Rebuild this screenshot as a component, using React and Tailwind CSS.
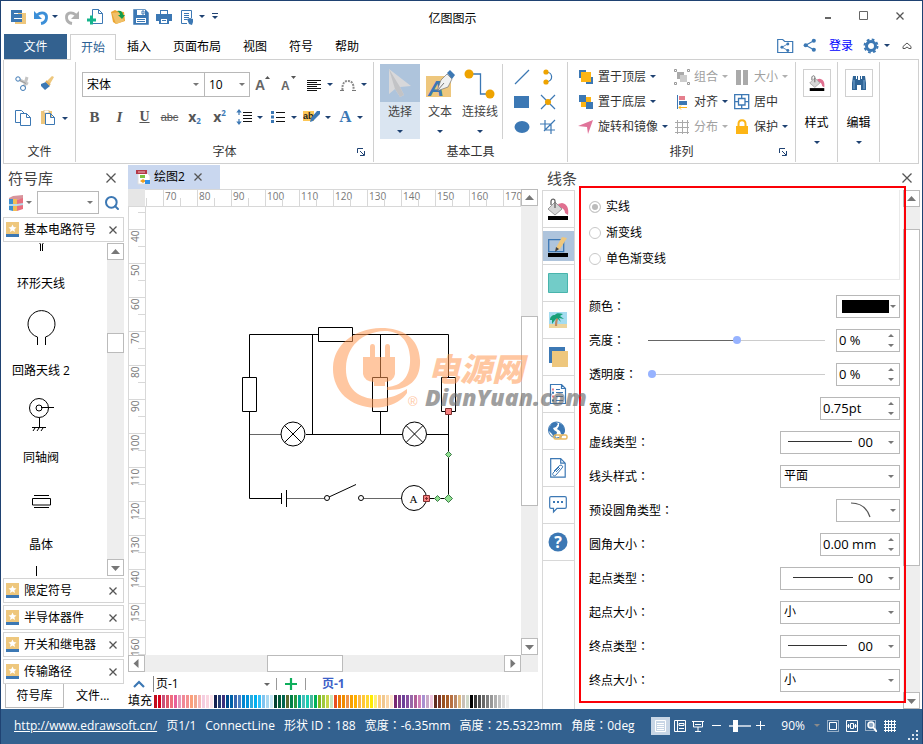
import React from 'react';
import { Search } from 'lucide-react';

const Icon = ({ w = 16, h = 16, children, className = '' }) => (
  <svg width={w} height={h} viewBox={`0 0 ${w} ${h}`} fill="none" className={`shrink-0 ${className}`} aria-hidden="true">
    {children}
  </svg>
);

const Caret = ({ className = 'text-[#1f4272]' }) => (
  <Icon w={6} h={3} className={className}>
    <path d="M0 0h6L3 3z" fill="currentColor" />
  </Icon>
);

const Cross = ({ size = 9, className = 'text-[#555]' }) => (
  <Icon w={size} h={size} className={className}>
    <path d={`M.5 .5L${size - 0.5} ${size - 0.5}M${size - 0.5} .5L.5 ${size - 0.5}`} stroke="currentColor" strokeWidth="1.3" />
  </Icon>
);

/* ---------- Icons ---------- */

const LogoIcon = () => (
  <Icon>
    <path d="M8 4h8v11H5v-3h7V7H8z" fill="#eec77d" />
    <path d="M1 1h11v3H4v1h8v2H1zM1 7h11v2H4v1h8v3H1z" fill="#3c78b4" />
    <path d="M1 1h3v12H1z" fill="#3c78b4" />
  </Icon>
);

const UndoIcon = ({ color = '#3c8fd8', flip }) => (
  <Icon className={flip ? '-scale-x-100' : ''}>
    <path d="M4 6C9 2 14 4 13.500 9c-.3 3-2.500 5-5.500 5.500" stroke={color} strokeWidth="2.800" />
    <path d="M1 2v8h8z" fill={color} />
  </Icon>
);

const NewIcon = () => (
  <Icon>
    <path d="M5.500 .5h6l4 4v10h-10zM11.500 .5v4h4" stroke="#3c78b4" fill="#fff" />
    <path d="M4.500 6.500v9M0 11h9" stroke="#14b48c" strokeWidth="3" />
  </Icon>
);

const OpenIcon = () => (
  <Icon>
    <path d="M1 3l4-2 2 1 7 1 1 9-9 3-3-2z" fill="#eda531" />
    <path d="M2 4l9-1 3 9-8 3z" fill="#f0c068" />
    <path d="M7 2c4-1 6 1 6 4h2l-3 4-4-4h2c0-2-1-3-3-4z" fill="#129c4c" />
  </Icon>
);

const SaveIcon = () => (
  <Icon>
    <path d="M1 1h11l3 3v11H1z" stroke="#3c78b4" strokeWidth="1.500" fill="#3c78b4" />
    <path d="M4 1h8v5H4zM3 9h10v5H3z" fill="#fff" />
    <path d="M9 2h2v3H9zM4 10.500h8M4 12.500h8" stroke="#3c78b4" />
  </Icon>
);

const PrintIcon = () => (
  <Icon>
    <path d="M4 1h8v4h4v7h-3v3H3v-3H0V5h4z" fill="#3c78b4" />
    <path d="M5 2h6v3H5zM5 10h6v4H5z" fill="#fff" />
    <path d="M6 11.500h4" stroke="#3c78b4" />
  </Icon>
);

const PreviewIcon = () => (
  <Icon>
    <path d="M12.500 9V1.500h-10v13H8M5 4.500h5M5 6.500h5M5 8.500h5M5 10.500h3" stroke="#3c78b4" />
    <path d="M8 10l3-1 3 1v3l-1 3-3-1z" fill="#3c78b4" />
  </Icon>
);

const ShareNodes = ({ x = 0, y = 0, s = 1 }) => (
  <g transform={`translate(${x} ${y}) scale(${s})`} fill="#3c78b4">
    <path d="M12 3L3 8l9 5" stroke="#3c78b4" strokeWidth="1.300" fill="none" />
    <circle cx="12" cy="3" r="2.300" />
    <circle cx="3" cy="8" r="2.300" />
    <circle cx="12" cy="13" r="2.300" />
  </g>
);

const GearIcon = () => (
  <Icon>
    <circle cx="8" cy="8" r="4.500" stroke="#3c78b4" strokeWidth="3" />
    <circle cx="8" cy="8" r="6.500" stroke="#3c78b4" strokeWidth="2" strokeDasharray="2.700 2.400" />
  </Icon>
);

const CutIcon = () => (
  <Icon>
    <path d="M5 4l8 4M9 12l3-11" stroke="#c4c4c4" strokeWidth="3" />
    <circle cx="3" cy="3" r="2.200" stroke="#3c78b4" fill="#fff" />
    <circle cx="8" cy="12" r="2.500" stroke="#3c78b4" fill="#fff" />
    <path d="M5 4.500l6 3" stroke="#999" />
  </Icon>
);

const BrushIcon = () => (
  <Icon>
    <path d="M7 5l5-5 2 1-4 7z" fill="#eec77d" />
    <path d="M1 8l5-2 4 4-5 4-4-4z" fill="#3c78b4" />
    <path d="M6 5l4 4" stroke="#e0ac58" strokeWidth="2" />
  </Icon>
);

const CopyIcon = () => (
  <Icon>
    <path d="M5 12.500H.5v-12h6l3 3M5.500 3.500h6l4 4v8h-10z" stroke="#3c78b4" fill="#fff" />
    <path d="M11.500 3.500v4h4" stroke="#3c78b4" />
  </Icon>
);

const PasteIcon = () => (
  <Icon>
    <path d="M0 1h11v13H0z" fill="#eec77d" />
    <path d="M3 0h5v3H3z" fill="#fff" stroke="#d9b36c" strokeWidth=".6" />
    <path d="M4.500 3.500h5l4 4v7h-9zM9.500 3.500v4h4" stroke="#3c78b4" fill="#fff" />
  </Icon>
);

const LineSpacingIcon = () => (
  <Icon>
    <path d="M3 1v5M3 10v5" stroke="#3c78b4" strokeWidth="1.200" />
    <path d="M3 0L.3 3.500h5.400zM3 16L.3 12.500h5.400z" fill="#3c78b4" />
    <path d="M7 3.500h9M7 6.500h9M7 9.500h9M7 12.500h9" stroke="#111" />
  </Icon>
);

const ListIcon = () => (
  <Icon>
    <path d="M1 2h3v3H1zM1 6.500h3v3H1zM1 11h3v3H1z" fill="#3c78b4" />
    <path d="M6 3.500h9M6 8.500h9M6 12.500h9" stroke="#111" />
  </Icon>
);

const AlignIcon = () => (
  <Icon>
    <path d="M1 3.500h14M1 5.500h10M1 7.500h14M1 9.500h10M1 11.500h14M1 13.500h10" stroke="#111" />
  </Icon>
);

const ArcTextIcon = () => (
  <Icon>
    <path d="M2.500 13C2 7 4 4 8 4s6 3 5.500 9" stroke="#8a8a8a" strokeWidth="2" strokeDasharray="2 1" />
    <path d="M0 13.500h4M12 13.500h4" stroke="#777" />
  </Icon>
);

const HighlightIcon = () => (
  <Icon w={17} h={16}>
    <path d="M0 2h11v10H0z" fill="#fdc757" />
    <text x="0" y="10" fontSize="9" fontWeight="bold" fontFamily="Liberation Sans" fill="#222">ab</text>
    <path d="M14 2h3v3l-7 7-3 1 1-4z" fill="#3c78b4" />
  </Icon>
);

const LaunchIcon = () => (
  <Icon w={8} h={8}>
    <path d="M.5 5V.5H6M3 3l4 4M7.500 3v4.500H3" stroke="#1f4272" />
  </Icon>
);

const CursorIcon = () => (
  <Icon w={32} h={34}>
    <path d="M5 3v25l6-5 5 8 4-2-4-8 11-1z" fill="#d8d8da" />
    <path d="M5 3l11 18 4 8-4 2-5-8z" fill="#c2c3c6" />
  </Icon>
);

const TextToolIcon = () => (
  <Icon w={32} h={32}>
    <path d="M2 9h25v21H2z" fill="#eec77d" />
    <text x="4" y="29" fontSize="22" fontWeight="bold" fontStyle="italic" fontFamily="Liberation Sans" fill="#3c78b4">A</text>
    <path d="M23 7l5 5-4 8-11 4 4-11z" fill="#f1f1f1" stroke="#777" strokeWidth=".7" />
    <path d="M13 24l7-8" stroke="#777" />
    <path d="M23 6l3-3 5 5-3 4z" fill="#3c78b4" />
  </Icon>
);

const ConnectorIcon = () => (
  <Icon w={32} h={32}>
    <path d="M6 7h10.500v20h10" stroke="#3c78b4" strokeWidth="1.300" />
    <circle cx="5" cy="7" r="4.500" fill="#eea300" />
    <circle cx="26" cy="27" r="4.500" fill="#eea300" />
  </Icon>
);

const BucketIcon = ({ size = 22 }) => (
  <svg width={size} height={size} viewBox="0 0 22 22" fill="none" className="shrink-0" aria-hidden="true">
    <path d="M11 6l4-1c5 1 7 5 6 12l-3-2c0-3-2-5-5-5z" fill="#e07090" />
    <path d="M1 11l7-7 7 7-7 6z" fill="#d6d6d6" stroke="#9a9a9a" />
    <path d="M4 7V3c1-3 4-2 4 0v7" stroke="#666" strokeWidth="1.300" />
    <path d="M1 18h20v4H1z" fill="#000" />
  </svg>
);

const BinocularsIcon = () => (
  <Icon>
    <path d="M2 1h3v3h1V1h1v4h2V1h1v3h1V1h3l1 7v7h-5v-5H6v5H1V8z" fill="#2f6496" />
    <path d="M3 5v9M13 5v9" stroke="#7aa9d4" />
  </Icon>
);

const BooksIcon = () => (
  <Icon>
    <path d="M1 3l4-2 10-1v4L9 5 1 5z" fill="#d8949c" />
    <path d="M1 4h4v12l-4-1z" fill="#3c8fd0" />
    <path d="M5 4h4v12H5z" fill="#f1bd55" />
    <path d="M9 5l6-2v11l-6 2z" fill="#e8707f" />
    <path d="M1 9h8l6-1v2l-6 1H1z" fill="#b9dcea" />
  </Icon>
);

const StarBookIcon = () => (
  <Icon w={13} h={15}>
    <path d="M0 0h13v12H0z" fill="#eec77d" />
    <path d="M6.500 2.500l1.200 2.600 2.800.3-2.100 1.900.6 2.700-2.500-1.400L4 10l.6-2.700-2.100-1.900 2.800-.3z" fill="#fff" />
    <path d="M0 12h13v3H0z" fill="#3c78b4" />
  </Icon>
);

const DocIcon = () => (
  <Icon w={15} h={15}>
    <path d="M2 2h8l4 4v8H2z" fill="#fff" stroke="#ddd" />
    <path d="M0 0h11v4H0z" fill="#b43a48" />
    <path d="M2 2h7" stroke="#e8b8bc" />
    <path d="M4 5h5v3H4z" fill="#7cc242" />
    <path d="M4 11l3-2 3 2-3 2z" fill="#f0a020" />
    <path d="M9 10h5v4H9z" fill="#2e8fe8" />
  </Icon>
);

/* ---------- Ribbon ---------- */

const RibbonGroup = ({ label, launcher, className = '', children }) => (
  <section className={`flex flex-col border-r border-[#d0d0d0] mt-0.5 h-[100px] ${className}`}>
    <div className="flex-1">{children}</div>
    <div className="relative h-5 leading-5 text-center text-[#333]">
      {label}
      {launcher && (
        <button aria-label={`${label}设置`} className="absolute right-2 top-[6px]">
          <LaunchIcon />
        </button>
      )}
    </div>
  </section>
);

const ToolButton = ({ label, caret, className = '', children }) => (
  <button aria-label={label} className={`flex items-center justify-center gap-[5px] h-6 ${className}`}>
    {children}
    {caret && <Caret />}
  </button>
);

const BigButton = ({ label, active, children }) => (
  <button className={`flex flex-col items-center w-10 h-[75px] text-[#444] ${active ? 'bg-[#dae5f1]' : ''}`}>
    <span className={`flex items-center justify-center w-full h-[38px] ${active ? 'bg-[#aec4dc]' : ''}`}>{children}</span>
    <span className="leading-5">{label}</span>
    <Caret className="text-[#1f4272] mt-2" />
  </button>
);

const ArrangeButton = ({ icon, label, caret, disabled }) => (
  <button disabled={disabled} className={`flex items-center gap-1 h-[25px] whitespace-nowrap ${disabled ? 'text-[#a0a0a0]' : 'text-[#333]'}`}>
    {icon}
    {label}
    {caret && <Caret className={disabled ? 'text-[#b0b0b0]' : 'text-[#1f4272]'} />}
  </button>
);

const PanelButton = ({ label, children }) => (
  <section className="flex flex-col items-center w-[42px] mt-0.5 h-[100px] border-r border-[#d0d0d0]">
    <button className="flex flex-col items-center mt-[7px]">
      <span className="flex items-center justify-center w-7 h-7 border border-[#d0d0d0]">{children}</span>
      <span className="mt-4 leading-5">{label}</span>
      <Caret className="text-[#1f4272] mt-2" />
    </button>
  </section>
);

const Ribbon = () => (
  <div className="flex ml-0.5 mr-[3px] h-[104px] border border-t-0 border-[#d0d0d0]">
    <RibbonGroup label="文件" className="w-[72px]">
      <div className="flex flex-col gap-[10px] pt-[10px] pl-[11px]">
        <div className="flex">
          <ToolButton label="剪切" className="w-[25px] !justify-start"><CutIcon /></ToolButton>
          <ToolButton label="格式刷"><BrushIcon /></ToolButton>
        </div>
        <div className="flex">
          <ToolButton label="复制" className="w-[26px] !justify-start"><CopyIcon /></ToolButton>
          <ToolButton label="粘贴" caret><PasteIcon /></ToolButton>
        </div>
      </div>
    </RibbonGroup>

    <RibbonGroup label="字体" launcher className="w-[298px]">
      <div className="flex flex-col gap-2 pt-[10px] pl-[6px]">
        <div className="flex items-center">
          <div className="relative flex items-center">
            <select aria-label="字体" className="appearance-none w-[123px] h-[25px] pl-1 border border-[#b8b8b8] bg-white">
              <option>宋体</option>
            </select>
            <Caret className="absolute right-[6px] text-[#777] pointer-events-none" />
          </div>
          <div className="relative flex items-center -ml-px">
            <select aria-label="字号" className="appearance-none w-[46px] h-[25px] pl-1 border border-[#b8b8b8] bg-white">
              <option>10</option>
            </select>
            <Caret className="absolute right-[5px] text-[#777] pointer-events-none" />
          </div>
          <ToolButton label="增大字号" className="w-[26px]">
            <Icon h={20}>
              <text x="0" y="15" fontSize="14" fontWeight="bold" fontFamily="Liberation Sans" fill="#666">A</text>
              <path d="M10 4h5L12.500 1z" fill="#555" />
            </Icon>
          </ToolButton>
          <ToolButton label="减小字号" className="w-[26px]">
            <Icon h={20}>
              <text x="0" y="15" fontSize="12" fontWeight="bold" fontFamily="Liberation Sans" fill="#666">A</text>
              <path d="M10 1h5L12.500 4z" fill="#555" />
            </Icon>
          </ToolButton>
          <ToolButton label="对齐方式" caret className="w-[34px]"><AlignIcon /></ToolButton>
          <ToolButton label="弧形文字" caret className="w-[34px]"><ArcTextIcon /></ToolButton>
        </div>
        <div className="flex items-center text-[#555]">
          <ToolButton label="粗体" className="w-[25px] font-['Liberation_Serif',serif] font-bold text-[15px]">B</ToolButton>
          <ToolButton label="斜体" className="w-[25px] font-['Liberation_Serif',serif] font-bold italic text-[15px]">I</ToolButton>
          <ToolButton label="下划线" className="w-[25px] font-['Liberation_Serif',serif] underline font-bold text-[14px]">U</ToolButton>
          <ToolButton label="删除线" className="w-[25px] font-['Liberation_Sans',sans-serif] line-through text-[11px]">abc</ToolButton>
          <ToolButton label="下标" className="w-[25px] !gap-0 font-bold text-[14px]">
            <span>x</span>
            <span className="text-[8px] text-[#3c78b4] self-end">2</span>
          </ToolButton>
          <ToolButton label="上标" className="w-[25px] !gap-0 font-bold text-[14px]">
            <span>x</span>
            <span className="text-[8px] text-[#3c78b4] self-start">2</span>
          </ToolButton>
          <ToolButton label="行距" caret className="w-[34px]"><LineSpacingIcon /></ToolButton>
          <ToolButton label="项目符号" caret className="w-[34px]"><ListIcon /></ToolButton>
          <ToolButton label="突出显示" caret className="w-[34px]"><HighlightIcon /></ToolButton>
          <ToolButton label="字体颜色" caret className="w-[34px] font-['Liberation_Serif',serif] font-bold text-[17px] text-[#3c78b4]">A</ToolButton>
        </div>
      </div>
    </RibbonGroup>

    <RibbonGroup label="基本工具" className="w-[194px]">
      <div className="flex pt-0.5 pl-[6px]">
        <BigButton label="选择" active><CursorIcon /></BigButton>
        <BigButton label="文本"><TextToolIcon /></BigButton>
        <BigButton label="连接线"><ConnectorIcon /></BigButton>
        <div className="grid grid-cols-2 w-[48px] ml-0.5 pl-2 gap-x-1 border-l border-[#d0d0d0] box-content">
          <ToolButton label="直线" className="!h-[25px]">
            <Icon><path d="M1 15L15 1" stroke="#3c78b4" strokeWidth="1.200" /></Icon>
          </ToolButton>
          <ToolButton label="曲线" className="!h-[25px]">
            <Icon>
              <path d="M6 3c7 0 8 9 0 10" stroke="#3c78b4" strokeWidth="1.200" />
              <circle cx="6" cy="3" r="2.600" fill="#eea300" />
              <circle cx="6" cy="13" r="2.600" fill="#eea300" />
            </Icon>
          </ToolButton>
          <ToolButton label="矩形" className="!h-[25px]">
            <Icon><path d="M0 2h15v12H0z" fill="#3c78b4" /></Icon>
          </ToolButton>
          <ToolButton label="断开" className="!h-[25px]">
            <Icon>
              <path d="M1 1l14 14M15 1L1 15" stroke="#3c78b4" strokeWidth="1.200" />
              <circle cx="8" cy="8" r="3" fill="#eea300" />
            </Icon>
          </ToolButton>
          <ToolButton label="椭圆" className="!h-[25px]">
            <Icon><ellipse cx="8" cy="8" rx="7.500" ry="6" fill="#3c78b4" /></Icon>
          </ToolButton>
          <ToolButton label="裁剪" className="!h-[25px]">
            <Icon><path d="M5 1v10h10M0 5h11v10M15 1L4 12" stroke="#3c78b4" strokeWidth="1.200" /></Icon>
          </ToolButton>
        </div>
      </div>
    </RibbonGroup>

    <RibbonGroup label="排列" launcher className="w-[228px]">
      <div className="grid grid-cols-[96px_60px_auto] pt-0.5 pl-[10px]">
        <ArrangeButton label="置于顶层" caret icon={(
          <Icon>
            <path d="M1 1h7v8H1zM8 8h7v7H8z" fill="#3c78b4" />
            <path d="M3 3h10v10H3z" fill="#fdb515" />
          </Icon>
        )} />
        <ArrangeButton label="组合" caret disabled icon={(
          <Icon>
            <path d="M3 3h7v7H3z" fill="#aaa" /><path d="M6 6h7v7H6z" fill="#ccc" />
            <path d="M.5 .5h2v2h-2zM13.500 .5h2v2h-2zM.5 13.500h2v2h-2zM13.500 13.500h2v2h-2z" stroke="#999" />
          </Icon>
        )} />
        <ArrangeButton label="大小" caret disabled icon={<Icon><path d="M2 1h5v15H2zM9 1h5v15H9z" fill="#aaa" /></Icon>} />

        <ArrangeButton label="置于底层" caret icon={(
          <Icon>
            <path d="M3 3h10v10H3z" fill="#fdb515" />
            <path d="M1 1h7v7H1zM8 8h7v7H8z" fill="#3c78b4" />
          </Icon>
        )} />
        <ArrangeButton label="对齐" caret icon={(
          <Icon>
            <path d="M3.500 1v14" stroke="#3c78b4" />
            <path d="M5 2h6v4H5z" fill="#e57f8d" /><path d="M5 7h8v4H5z" fill="#3c78b4" />
            <path d="M13 13.500H5M7 11.500l-2 2 2 2" stroke="#fdb515" />
          </Icon>
        )} />
        <ArrangeButton label="居中" icon={(
          <Icon>
            <path d="M.7 .7h14v14H.7zM4.500 4.500h6.500v6.500H4.500zM7.700 1v3M7.700 11v4M1 7.700h3M11 7.700h4" stroke="#3c78b4" strokeWidth="1.300" />
          </Icon>
        )} />

        <ArrangeButton label="旋转和镜像" caret icon={<Icon><path d="M0 7l15-6-5 14-1-7z" fill="#e0749a" /></Icon>} />
        <ArrangeButton label="分布" caret disabled icon={<Icon><path d="M1 3.500h14M1 8.500h14M1 13.500h14M3.500 1v14M8.500 1v14M13.500 1v14" stroke="#aaa" /></Icon>} />
        <ArrangeButton label="保护" caret icon={(
          <Icon>
            <path d="M4.500 8V5c0-5 7-5 7 0v3" stroke="#fdb515" strokeWidth="2" />
            <path d="M2 7h12v8H2z" fill="#fdb515" />
          </Icon>
        )} />
      </div>
    </RibbonGroup>

    <PanelButton label="样式"><BucketIcon size={16} /></PanelButton>
    <PanelButton label="编辑"><BinocularsIcon /></PanelButton>
  </div>
);

/* ---------- Title and tabs ---------- */

const TitleBar = () => (
  <header className="grid grid-cols-[1fr_auto_1fr] items-center h-[33px] pr-[18px]">
    <div className="flex items-center pl-[9px] pb-0.5">
      <LogoIcon />
      <button aria-label="撤消" className="flex items-center gap-[3px] ml-[7px]"><UndoIcon /><Caret /></button>
      <button aria-label="恢复" className="ml-[6px]"><UndoIcon color="#b0b0b0" flip /></button>
      <div className="flex gap-[7px] ml-[7px]">
        <button aria-label="新建"><NewIcon /></button>
        <button aria-label="打开"><OpenIcon /></button>
        <button aria-label="保存"><SaveIcon /></button>
        <button aria-label="打印"><PrintIcon /></button>
        <button aria-label="预览" className="flex items-center gap-1"><PreviewIcon /><Caret /></button>
        <button aria-label="自定义快速访问工具栏">
          <Icon w={6} h={7}><path d="M0 .5h6" stroke="#1f4272" /><path d="M0 3h6L3 6z" fill="#1f4272" /></Icon>
        </button>
      </div>
    </div>
    <h1 className="pt-0.5">亿图图示</h1>
    <div className="flex items-center justify-end gap-[27px] pb-1">
      <button aria-label="最小化"><Icon w={7} h={9}><path d="M0 7h6" stroke="#666" strokeWidth="2" /></Icon></button>
      <button aria-label="最大化"><Icon w={10} h={10}><path d="M.5 .5h8v8h-8z" stroke="#666" /></Icon></button>
      <button aria-label="关闭"><Cross size={8} /></button>
    </div>
  </header>
);

const TabBar = () => (
  <nav className="flex items-stretch h-[26px] mx-[3px] border-b border-[#d0d0d0]">
    <button className="w-[63px] bg-[#33618f] text-white">文件</button>
    <button className="w-[46px] ml-[3px] -mb-px bg-white border border-b-0 border-[#d0d0d0] text-[#2b5f94]">开始</button>
    {['插入', '页面布局', '视图', '符号', '帮助'].map((tab) => (
      <button key={tab} className="px-[11px]">{tab}</button>
    ))}
    <div className="flex items-center ml-auto pr-[7px] pb-0.5">
      <button aria-label="分享文件">
        <Icon w={17} h={16}>
          <path d="M.7 14.500V1.500h5l2 2h8v11z" stroke="#3c78b4" strokeWidth="1.200" />
          <ShareNodes x={3} y={4} s={0.65} />
        </Icon>
      </button>
      <button aria-label="分享" className="ml-2"><Icon><ShareNodes x={1} y={0} s={0.9} /></Icon></button>
      <a href="#login" className="ml-[11px] text-[#0000ff]">登录</a>
      <button aria-label="设置" className="flex items-center gap-[5px] ml-[10px]">
        <GearIcon />
        <Caret />
      </button>
      <button aria-label="折叠功能区" className="ml-3">
        <Icon w={10} h={8}><path d="M1 4.500l4-3.500 4 3.500v2H7L5 5 3 6.500H1z" stroke="#555" /></Icon>
      </button>
    </div>
  </nav>
);

/* ---------- Scrollbars ---------- */

const ArrowButton = ({ dir }) => {
  const paths = {
    up: 'M0 7h9L4.500 2z',
    down: 'M0 3h9L4.500 8z',
    left: 'M6.500 0v9L1.500 4.500z',
    right: 'M2.500 0v9L7.500 4.500z',
  };
  return (
    <button aria-label={dir} className="flex items-center justify-center shrink-0 w-[17px] h-[17px] bg-white border border-[#bbb]">
      <Icon w={9} h={9}><path d={paths[dir]} fill="#777" /></Icon>
    </button>
  );
};

const VScroll = ({ before, thumb, after, className = '' }) => (
  <div className={`flex flex-col shrink-0 w-[17px] bg-[#eee] ${className}`}>
    <ArrowButton dir="up" />
    <div style={{ flexGrow: before }} />
    <div className="bg-white border border-[#bbb]" style={{ flexGrow: thumb }} />
    <div style={{ flexGrow: after }} />
    <ArrowButton dir="down" />
  </div>
);

/* ---------- Symbol library ---------- */

const LibraryHeader = ({ title }) => (
  <div className="flex items-center justify-between h-[25px] shrink-0 pl-0.5 pr-[6px] bg-white border border-[#d4d4d4]">
    <span className="flex items-center gap-[5px] whitespace-nowrap"><StarBookIcon />{title}</span>
    <button aria-label={`关闭${title}`}><Cross size={8} /></button>
  </div>
);

const Symbol = ({ label, children }) => (
  <figure className="w-[76px] text-center">
    <svg width="76" height="69" viewBox="0 0 76 69" fill="none" stroke="#000" className="block">{children}</svg>
    {label && <figcaption className="h-[18px] leading-[18px] whitespace-nowrap">{label}</figcaption>}
  </figure>
);

const SymbolLibrary = () => (
  <aside className="flex flex-col w-[121px] shrink-0 ml-0.5">
    <div className="flex items-center justify-between h-[27px] pl-[5px] pr-2 text-[15px] text-[#444]">
      符号库
      <button aria-label="关闭符号库"><Cross size={10} /></button>
    </div>
    <div className="flex items-center h-[23px] pl-[5px]">
      <button aria-label="库" className="flex items-center gap-0.5"><BooksIcon /><Caret className="text-[#777]" /></button>
      <div className="relative flex items-center ml-[5px]">
        <input aria-label="搜索符号" className="w-[62px] h-[23px] border border-[#b8b8b8]" />
        <Caret className="absolute right-[6px] text-[#777]" />
      </div>
      <button aria-label="搜索" className="ml-[5px]"><Search size={16} strokeWidth={3} className="text-[#3c78b4]" /></button>
    </div>
    <div className="h-[3px]" />
    <LibraryHeader title="基本电路符号" />
    <div className="flex flex-1 min-h-0 basis-0 pt-px pb-0.5">
      <div className="flex flex-col flex-1 justify-end h-full overflow-hidden">
        <div className="-mb-[47px]">
          <Symbol label="环形天线">
            <path d="M33.500 34l4 4v7M43.500 34l-4 4v7" />
          </Symbol>
          <Symbol label="回路天线 2">
            <path d="M34.500 52v-8a13.500 13.500 0 1 1 8 0v8" />
          </Symbol>
          <Symbol label="同轴阀">
            <circle cx="36" cy="28" r="9.500" />
            <circle cx="36" cy="28" r="3" />
            <path d="M38 27.500h13M36.500 38v9M29 47.500h14M32 48l-2 3M36 48l-2 3M40 48l-2 3" />
          </Symbol>
          <Symbol label="晶体">
            <path d="M31 28.500h15M29.500 31.500h18v6.500h-18zM31 40.500h15" />
          </Symbol>
          <Symbol><path d="M33.500 12v30" /></Symbol>
        </div>
      </div>
      <VScroll before={73} thumb={18} after={206} />
    </div>
    <div className="flex flex-col gap-0.5">
      {['限定符号', '半导体器件', '开关和继电器', '传输路径'].map((title) => (
        <LibraryHeader key={title} title={title} />
      ))}
    </div>
    <div className="flex h-[25px] pb-px">
      <button className="w-[59px] ml-0.5 border border-t-0 border-[#bbb]">符号库</button>
      <button className="ml-3">文件...</button>
    </div>
  </aside>
);

/* ---------- Canvas ---------- */

const hMarks = [70, 80, 90, 100, 110, 120, 130, 140, 150, 160, 170];
const vMarks = [40, 50, 60, 70, 80, 90, 100, 110, 120, 130, 140, 150, 160];

const HRuler = () => (
  <div className="flex flex-1 h-[18px] overflow-hidden border-y border-[#d8d8d8] text-[10px] text-[#777]">
    <div className="flex items-end w-[18px] shrink-0 pl-px"><i className="w-px h-2 bg-[#d8d8d8]" /></div>
    {hMarks.map((n) => (
      <div key={n} className="flex justify-between w-[34px] shrink-0 border-l border-[#d8d8d8]">
        <span className="w-4 pl-px leading-[12px]">{n}</span>
        <i className="w-px h-2 mr-4 self-end bg-[#d8d8d8]" />
      </div>
    ))}
  </div>
);

const VRuler = () => (
  <div className="flex flex-col w-[18px] shrink-0 overflow-hidden border-x border-[#d8d8d8] text-[10px] text-[#777]">
    <div className="h-[22px] shrink-0 pt-[5px]"><i className="block w-[7px] h-px ml-auto bg-[#d8d8d8]" /></div>
    {vMarks.map((n) => (
      <div key={n} className="flex justify-between h-[34px] shrink-0 border-t border-[#d8d8d8]">
        <span className="[writing-mode:vertical-rl] rotate-180 w-3 h-[21px] pb-px leading-[12px] text-right">{n}</span>
        <i className="w-[7px] h-px mt-4 shrink-0 -ml-2 bg-[#d8d8d8]" />
      </div>
    ))}
  </div>
);

const Circuit = () => (
  <svg width="375" height="449" viewBox="146 207 375 449" fill="none" className="block shrink-0">
    <g stroke="#000">
      <path d="M249.500 377V334.500H318M353 334.500h95.500V377M249.500 411v87.500H281M312.500 334v100M380.500 334v43M380.500 411v23M306 434.500h96M427 434.500h22M448.500 411v87.500H428" />
      <path d="M329 497l27-12.500" />
      <path d="M250 434.500h31M287 498.500h37M364 498.500h37" stroke="#666" />
      <path d="M318.500 327.500h34v14h-34zM242.500 377.500h14v34h-14zM372.500 377.500h15v34h-15zM441.500 377.500h14v34h-14z" />
      <path d="M281.500 493v11M286.500 490v17" />
      <circle cx="293" cy="434" r="12" />
      <circle cx="414.500" cy="434" r="12" />
      <path d="M284.500 425.500l17 17M301.500 425.500l-17 17M406 425.500l17 17M423 425.500l-17 17" />
      <circle cx="327" cy="498" r="2.500" fill="#fff" />
      <circle cx="361" cy="498" r="2.500" />
      <circle cx="414" cy="498" r="12.500" />
    </g>
    <text x="413.500" y="503" textAnchor="middle" fontSize="11" fontFamily="Liberation Serif" fill="#000">A</text>
    <g fill="#f88080" stroke="#803030">
      <path d="M445.500 408.500h6v6h-6zM423.500 495.500h6v6h-6z" />
      <path d="M425 498.500h3M426.500 497v3" />
    </g>
    <g fill="#90e090" stroke="#3f7a4a">
      <path d="M448.500 451.500l3 3-3 3-3-3zM437.500 495.500l3 3-3 3-3-3zM448.500 494.500l4 4-4 4-4-4z" />
    </g>
  </svg>
);

const Watermark = () => (
  <svg width="262" height="84" viewBox="330 328 262 84" fill="none" className="absolute left-[184px] top-[121px] z-20 pointer-events-none">
    <g fill="#ff9a55" opacity=".55">
      <path d="M407 393c-4 6-12 12-24 14-30 4-51-15-50-40 1-22 20-38 48-39 22 0 38 10 39 32 1 20-12 31-33 30v-3c16-1 24-12 23-30-1-17-11-26-25-26-24 1-38 16-39 36-1 22 14 33 33 32 12-1 20-4 28-10z" />
      <path d="M363 357h7v-10q0-3 2.500-3t2.500 3v10h10v-10q0-3 2.500-3t2.500 3v10h5v17q-1 7-10 8v4h-11v-4q-10-1-11-8z" />
      <text x="428" y="381" fontSize="32" fontWeight="900" fontStyle="italic" fontFamily="Noto Sans CJK SC">电源网</text>
      <text x="408" y="406" fontSize="13" fontFamily="Liberation Sans">®</text>
    </g>
    <text x="425" y="406" fontSize="23" fontWeight="800" fontStyle="italic" fontFamily="Open Sans" fill="#666" opacity=".62">DianYuan.com</text>
  </svg>
);

const swatches = [
  '#c00d1e', '#d8001c', '#c8507a', '#e0566a', '#ef6d7d', '#e8609a', '#e898b8', '#f08898', '#f59090', '#fba07a', '#f0a890', '#f8b8b8', '#f4cde0', '#fbd5e0', '#fde3ea',
  '#14204f', '#253a70', '#3c2f7c', '#004b8c', '#0061a8', '#3a68b0', '#4a80c4', '#0086d0', '#0094dc', '#2aaade', '#00b0f0', '#30c0f8', '#80c4f0', '#a8d8f0', '#c8e8f8',
  '#004030', '#005c38', '#006450', '#5c6c30', '#008048', '#289840', '#00a890', '#48bcb8', '#18d0b0', '#48b8a0', '#00b058', '#80b820', '#a0c840', '#c8d848', '#c8e8c0',
  '#e85020', '#f07800', '#f08c00', '#f09448', '#f8a000', '#ffb000', '#fcb848', '#ffc838', '#ffd830', '#ffec00', '#fff070', '#ffcc80', '#f0c890', '#fcd8a8', '#ffe8d0',
  '#782870', '#803c88', '#6c4098', '#8850a0', '#9868a8', '#b06098', '#d080b8', '#a890d0', '#c8a8c8', '#f0c8e0',
  '#602c20', '#803828', '#985020', '#a85c28', '#b87040', '#b88868', '#e0b880', '#c8c0b8', '#d0d8c8',
  '#000000', '#383838', '#505050', '#686868', '#808080', '#989898', '#b0b0b0', '#c4c4c4', '#dadada', '#ececec',
];

const DocumentArea = () => (
  <main className="flex flex-col flex-1 min-w-0 mx-1">
    <div className="flex items-stretch h-[25px] pt-px">
      <div className="flex items-center w-[92px] pl-2 bg-[#c9d7ef]">
        <DocIcon />
        <span className="ml-[3px]">绘图2</span>
        <button aria-label="关闭绘图2" className="ml-[9px]"><Cross size={8} /></button>
      </div>
    </div>
    <div className="flex flex-1 min-h-0">
      <div className="flex flex-col flex-1 min-w-0">
        <div className="flex">
          <div className="w-[17px] h-[18px] bg-[#e6e6e6] border-b border-[#d8d8d8]" />
          <HRuler />
        </div>
        <div className="flex flex-1 min-h-0 basis-0">
          <VRuler />
          <div className="relative flex-1 min-w-0">
            <Circuit />
            <Watermark />
          </div>
        </div>
      </div>
      <VScroll before={111} thumb={188} after={133} />
    </div>
    <div className="flex h-[17px] pr-[17px] bg-[#eee]">
      <ArrowButton dir="left" />
      <div className="grow-[123]" />
      <div className="grow-[74] bg-white border border-[#bbb]" />
      <div className="grow-[162]" />
      <ArrowButton dir="right" />
    </div>
    <div className="flex items-center h-[22px] pt-0.5">
      <button aria-label="展开" className="ml-[5px]">
        <Icon w={12} h={8}><path d="M1 7l5-5 5 5" stroke="#3c78b4" strokeWidth="2.200" /></Icon>
      </button>
      <div className="relative flex items-center ml-2 border-l border-[#888]">
        <select aria-label="页面" className="appearance-none w-[122px] h-4 pl-0.5">
          <option>页-1</option>
        </select>
        <Caret className="absolute right-[6px] text-[#666] pointer-events-none" />
      </div>
      <button aria-label="添加页" className="flex items-center justify-center w-[30px] h-3 border-x border-[#999]">
        <Icon w={12} h={12}><path d="M6 0v12M0 6h12" stroke="#0fae5c" strokeWidth="2.200" /></Icon>
      </button>
      <button className="ml-4 font-bold text-[#3c60c8]">页-1</button>
    </div>
    <div className="flex items-end h-[15px] pb-px whitespace-nowrap">
      <span className="mr-0.5 leading-[14px]">填充</span>
      <div className="flex gap-px overflow-hidden">
        {swatches.map((c, i) => (
          <i key={i} className="w-[3px] h-[13px] shrink-0" style={{ backgroundColor: c }} />
        ))}
      </div>
    </div>
  </main>
);

/* ---------- Format panel ---------- */

const sideTools = [
  { name: '填充', icon: <BucketIcon /> },
  {
    name: '线条',
    active: true,
    icon: (
      <Icon w={22} h={22}>
        <path d="M1.700 4.700h15v12h-15z" stroke="#3c78b4" strokeWidth="1.300" />
        <path d="M15 2l5 1-7 11-5 2 2-5z" fill="#eec77d" />
        <path d="M9 12l3 2-4 3z" fill="#444" />
        <path d="M1 18h20v4H1z" fill="#000" />
      </Icon>
    ),
  },
  { name: '阴影', icon: <Icon w={20} h={20}><path d="M.5 .5h19v19H.5z" fill="#72ccc8" stroke="#48b4ac" /></Icon> },
  {
    name: '图片',
    icon: (
      <Icon w={20} h={18}>
        <path d="M1 1h18v13H1z" fill="#a4dcf0" />
        <path d="M1 13h18v4H1z" fill="#ecd49c" />
        <path d="M8 15c0-4 0-6 2-9" stroke="#c08860" strokeWidth="2.200" />
        <path d="M2 9c0-3 2-5 5-5 1-2 4-2 8-1l-3 2 4 3-5-1 2 4-4-4-2 2-3 4 0-4z" fill="#17a078" />
      </Icon>
    ),
  },
  { name: '图层', icon: <Icon w={20} h={20}><path d="M1 0h16v16H1z" fill="#3c78b4" /><path d="M4 4h16v16H4z" fill="#eec77d" /></Icon> },
  {
    name: '属性',
    icon: (
      <Icon w={18} h={20}>
        <path d="M1.500 .5h11l4 4v15h-15zM12.500 .5v4h4M7 5.500h4M7 8.500h7M7 12.500h7M7 16.500h7" stroke="#3c78b4" strokeWidth="1.200" />
        <path d="M3 4.500h2v2H3zM3 11.500h2v2H3z" fill="#e57f8d" />
        <path d="M3 7.800h2v2H3zM3 15.500h2v2H3z" fill="#3c78b4" />
      </Icon>
    ),
  },
  {
    name: '超链接',
    icon: (
      <Icon w={20} h={20}>
        <circle cx="8.500" cy="9" r="8" fill="#fff" stroke="#3c78b4" />
        <path d="M1 7l3-5 4-1 2 2-2 3-3 1 1 2 3 2-1 4-2 2-2-4-3-3zM11 2l4 2 2 6-2 4-2-1-1-3-3-2 2-3z" fill="#3c78b4" />
        <rect x="6" y="14" width="7" height="4" rx="1.500" stroke="#e8b860" strokeWidth="1.500" />
        <rect x="12" y="14" width="7" height="4" rx="1.500" stroke="#e8b860" strokeWidth="1.500" />
      </Icon>
    ),
  },
  {
    name: '附件',
    icon: (
      <Icon w={16} h={20}>
        <path d="M.7 .7h10l4.500 4.500v14H.7zM10.700 .7v4.500h4.500" stroke="#3c78b4" strokeWidth="1.200" />
        <path d="M4 13l5-5c2-2 5 0 3 2l-6 7c-2 2-4 0-3-2l6-6M6 14l4-4" stroke="#3c78b4" />
      </Icon>
    ),
  },
  {
    name: '批注',
    icon: (
      <Icon w={18} h={18}>
        <path d="M2 .7h14q1.300 0 1.300 1.300v9q0 1.300-1.300 1.300H8L4.500 16v-3.700H2Q.7 12.300.7 11V2Q.7 .7 2 .7z" stroke="#3c78b4" strokeWidth="1.200" />
        <path d="M4 5h2v2H4zM8 5h2v2H8zM12 5h2v2h-2z" fill="#3c78b4" />
      </Icon>
    ),
  },
  {
    name: '帮助',
    icon: (
      <Icon w={20} h={20}>
        <circle cx="10" cy="10" r="9.500" fill="#3c78b4" />
        <text x="10" y="15.500" textAnchor="middle" fontSize="16" fontWeight="bold" fontFamily="Open Sans" fill="#fff">?</text>
      </Icon>
    ),
  },
];

const Row = ({ label, id, children }) => (
  <div className="flex items-center justify-between h-[34px]">
    <label htmlFor={id} className="whitespace-nowrap">
      {label}<span className="font-['Noto_Sans_CJK_TC',sans-serif]">：</span>
    </label>
    {children}
  </div>
);

const SpinBox = ({ id, label, value, className }) => (
  <div className={`flex items-center justify-between h-[23px] pr-[5px] border border-[#b8b8b8] ${className}`}>
    <input id={id} aria-label={label} defaultValue={value} className="w-full min-w-0 pl-0.5 outline-none text-[13px]" />
    <Icon w={6} h={13} className="text-[#777]"><path d="M0 3h6L3 0zM0 10h6l-3 3z" fill="currentColor" /></Icon>
  </div>
);

const SelectBox = ({ id, value, line }) => (
  <div className="relative flex items-center w-[120px] h-[23px] border border-[#b8b8b8]">
    {line && <Icon w={66} h={2} className="ml-[7px]"><path d={line} stroke="#333" /></Icon>}
    <select id={id} className={`appearance-none flex-1 h-full outline-none ${line ? 'pl-1 text-[13px]' : 'pl-[3px]'}`}>
      <option>{value}</option>
    </select>
    <Caret className="absolute right-[5px] text-[#777] pointer-events-none" />
  </div>
);

const Slider = ({ id, value, className }) => (
  <input
    id={id}
    type="range"
    defaultValue={value}
    className={`appearance-none flex-1 min-w-0 h-4 mr-[11px] bg-transparent
      [&::-webkit-slider-runnable-track]:h-px
      [&::-webkit-slider-thumb]:appearance-none [&::-webkit-slider-thumb]:size-2 [&::-webkit-slider-thumb]:-mt-1
      [&::-webkit-slider-thumb]:rounded-full [&::-webkit-slider-thumb]:bg-[#97b3ff] ${className}`}
  />
);

const FormatPanel = () => (
  <aside className="flex flex-col w-[380px] shrink-0">
    <div className="flex items-center justify-between h-[22px] pt-[6px] pl-[5px] pr-[10px] text-[15px] text-[#444]">
      线条
      <button aria-label="关闭线条"><Cross size={10} /></button>
    </div>
    <div className="flex flex-1 min-h-0">
      <div className="flex flex-col w-[33px] mt-1 border-x border-t border-[#d8d8d8] shrink-0">
        {sideTools.map((tool) => (
          <button key={tool.name} aria-label={tool.name} className="flex items-center w-full h-[37px] border-b border-[#d8d8d8]">
            <span className={`flex items-center justify-center w-full h-[30px] pr-0.5 ${tool.active ? 'bg-[#aec4dc]' : ''}`}>{tool.icon}</span>
          </button>
        ))}
      </div>

      <form className="relative z-10 flex-1 min-w-0 ml-1 mb-[6px] pl-2 pr-1 border-2 border-[#fb0007]">
        <fieldset className="-ml-2 mt-0.5 pl-2 pt-1 pb-[7px] border-r border-b border-[#eaeaea]">
          {['实线', '渐变线', '单色渐变线'].map((label, i) => (
            <label key={label} className="flex items-center gap-[5px] h-[26px]">
              <input
                type="radio"
                name="lineType"
                defaultChecked={i === 0}
                className="appearance-none size-3 rounded-full border border-[#c8c8c8] bg-white checked:bg-[#bbb] checked:shadow-[inset_0_0_0_2px_#fff]"
              />
              {label}
            </label>
          ))}
        </fieldset>

        <div className="mt-[9px]">
          <Row label="颜色" id="color">
            <button id="color" type="button" className="flex items-center justify-between w-16 h-[23px] pl-[5px] pr-[3px] border border-[#b8b8b8]">
              <span className="w-[47px] h-[13px] bg-black" />
              <Caret className="text-[#777]" />
            </button>
          </Row>
          <div className="flex items-center h-[34px]">
            <label htmlFor="brightness" className="w-[59px] whitespace-nowrap">
              亮度<span className="font-['Noto_Sans_CJK_TC',sans-serif]">：</span>
            </label>
            <Slider id="brightness" value={50} className="[&::-webkit-slider-runnable-track]:bg-linear-to-r [&::-webkit-slider-runnable-track]:from-[#666] [&::-webkit-slider-runnable-track]:from-50% [&::-webkit-slider-runnable-track]:to-[#ccc] [&::-webkit-slider-runnable-track]:to-50%" />
            <SpinBox label="亮度" value="0 %" className="w-16" />
          </div>
          <div className="flex items-center h-[34px]">
            <label htmlFor="opacity" className="w-[59px] whitespace-nowrap">
              透明度<span className="font-['Noto_Sans_CJK_TC',sans-serif]">：</span>
            </label>
            <Slider id="opacity" value={0} className="[&::-webkit-slider-runnable-track]:bg-[#ccc]" />
            <SpinBox label="透明度" value="0 %" className="w-16" />
          </div>
          <Row label="宽度" id="width"><SpinBox id="width" value="0.75pt" className="w-20" /></Row>
          <Row label="虚线类型" id="dash"><SelectBox id="dash" value="00" line="M0 .5h64" /></Row>
          <Row label="线头样式" id="cap"><SelectBox id="cap" value="平面" /></Row>
          <Row label="预设圆角类型" id="corner">
            <button id="corner" type="button" className="flex items-center justify-end gap-[19px] w-16 h-[23px] pr-[3px] border border-[#b8b8b8]">
              <Icon w={20} h={16}><path d="M0 1c10 0 16 5 19 14" stroke="#555" strokeWidth="1.200" /></Icon>
              <Caret className="text-[#777]" />
            </button>
          </Row>
          <Row label="圆角大小" id="radius"><SpinBox id="radius" value="0.00 mm" className="w-20" /></Row>
          <Row label="起点类型" id="startType"><SelectBox id="startType" value="00" line="M5 .5h60" /></Row>
          <Row label="起点大小" id="startSize"><SelectBox id="startSize" value="小" /></Row>
          <Row label="终点类型" id="endType"><SelectBox id="endType" value="00" line="M0 .5h59" /></Row>
          <Row label="终点大小" id="endSize"><SelectBox id="endSize" value="小" /></Row>
        </div>
      </form>
      <VScroll before={22} thumb={336} after={127} className="mt-1 -ml-[3px] mr-0.5" />
    </div>
  </aside>
);

/* ---------- Status bar ---------- */

const Colon = () => <span className="font-['Noto_Sans_CJK_TC',sans-serif] text-[12px]">：</span>;

const StatusBar = () => (
  <footer className="flex items-center h-[35px] pl-[13px] pb-0.5 bg-[#33618f] text-white text-[12px] whitespace-nowrap">
    <div className="flex items-center gap-[9px]">
      <a href="http://www.edrawsoft.cn/" className="underline">http://www.edrawsoft.cn/</a>
      <span>页1/1</span>
      <span>ConnectLine</span>
      <span>形状 ID<Colon />188</span>
      <span>宽度<Colon />-6.35mm</span>
      <span>高度<Colon />25.5323mm</span>
      <span>角度<Colon />0deg</span>
    </div>
    <div className="flex items-center ml-auto">
      <button aria-label="普通视图" className="flex items-center justify-center w-[19px] h-[18px] bg-[#c8d6e6]">
        <Icon w={11} h={12}><path d="M.5 .5h10v11H.5zM2 3.500h7M2 5.500h7M2 7.500h7M2 9.500h7" stroke="#fff" /></Icon>
      </button>
      <button aria-label="大纲视图" className="ml-1">
        <Icon w={12} h={12}><path d="M.5 .5h11v11H.5zM3.500 1v10M5 3.500h5v2H5zM5 8.500h5" stroke="#fff" /></Icon>
      </button>
      <button aria-label="演示" className="ml-[6px]">
        <Icon w={12} h={12}><path d="M0 1.500h12M1.500 1v6h9V1M6 7v4M3 11.500h6M3 4.500h6" stroke="#fff" /></Icon>
      </button>
      <button aria-label="缩小" className="ml-2"><Icon w={9} h={9}><path d="M0 4.500h9" stroke="#fff" /></Icon></button>
      <input
        type="range"
        aria-label="缩放"
        defaultValue={20}
        className="appearance-none w-[22px] h-3 ml-2 bg-transparent [&::-webkit-slider-runnable-track]:h-0.5 [&::-webkit-slider-runnable-track]:bg-[#b8c8da] [&::-webkit-slider-thumb]:appearance-none [&::-webkit-slider-thumb]:w-[5px] [&::-webkit-slider-thumb]:h-3 [&::-webkit-slider-thumb]:-mt-[5px] [&::-webkit-slider-thumb]:bg-white"
      />
      <button aria-label="放大" className="ml-[5px]"><Icon w={9} h={9}><path d="M0 4.500h9M4.500 0v9" stroke="#fff" /></Icon></button>
      <button className="flex items-center gap-[9px] ml-4">90%<Caret className="text-[#8a8a8a]" /></button>
      <div className="flex items-center gap-[7px] ml-[7px]">
        <button aria-label="适应窗口">
          <Icon w={12} h={12}><path d="M.5 .5h11v11H.5z" stroke="#fff" strokeDasharray="1 1" /><path d="M2.500 2.500h7v7h-7z" stroke="#fff" /></Icon>
        </button>
        <button aria-label="适应宽度">
          <Icon w={12} h={12}><path d="M.5 .5h11v11H.5zM4.500 3.500h3v5h-3zM1 6h3M8 6h3M2.500 4v4M9.500 4v4" stroke="#fff" /></Icon>
        </button>
        <button aria-label="区域缩放">
          <Icon w={12} h={12}><path d="M.5 .5h10v10H.5z" stroke="#fff" strokeDasharray="1 1" /><circle cx="6" cy="5" r="3" stroke="#fff" strokeWidth="1.500" fill="#8fa9c4" /><path d="M8 7l4 5" stroke="#fff" strokeWidth="2" /></Icon>
        </button>
        <button aria-label="网格">
          <Icon w={12} h={12}><path d="M0 1.500h12M0 4.500h12M0 7.500h12M0 10.500h12M1.500 0v12M4.500 0v12M7.500 0v12M10.500 0v12" stroke="#fff" /></Icon>
        </button>
      </div>
      <Icon w={11} h={11} className="ml-3 mr-[3px] self-end mt-5">
        <path d="M8 0h2v2H8zM4 4h2v2H4zM8 4h2v2H8zM0 8h2v2H0zM4 8h2v2H4zM8 8h2v2H8z" fill="#dce6f0" />
      </Icon>
    </div>
  </footer>
);

export default function App() {
  return (
    <div className="flex flex-col min-h-screen bg-white border border-b-0 border-[#1f4272] overflow-hidden text-[12px] leading-4 text-black font-['Open_Sans','Noto_Sans_CJK_SC',sans-serif]">
      <TitleBar />
      <TabBar />
      <Ribbon />
      <div className="flex flex-1 min-h-0">
        <SymbolLibrary />
        <DocumentArea />
        <FormatPanel />
      </div>
      <StatusBar />
    </div>
  );
}
